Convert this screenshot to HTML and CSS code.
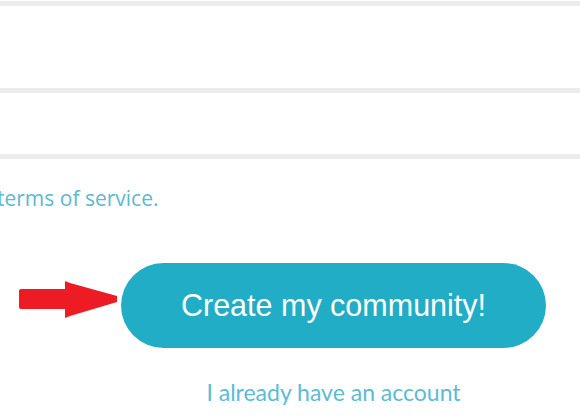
FILE: index.html
```html
<!DOCTYPE html>
<html lang="en">
<head>
  <meta charset="UTF-8">
  <meta name="viewport" content="width=device-width, initial-scale=1.0">
  <title>Create community</title>
  <link rel="stylesheet" href="styles.css">
</head>
<body>
  <div class="fields">
    <div class="field field-name"></div>
    <div class="field field-email"></div>
  </div>

  <p class="terms"><a href="#">terms of service.</a></p>

  <div class="actions">
    <svg class="arrow" width="99" height="40" viewBox="0 0 99 40">
      <path d="M2 9 H46 V1 L51 3 L98 16 V22 L51 36 L46 38 V29 H2 Q0 29 0 27 V11 Q0 9 2 9 Z" fill="#ed1c24"/>
    </svg>
    <button type="submit" class="create">Create my community!</button>
    <a href="#" class="login">I already have an account</a>
  </div>
</body>
</html>
```

FILE: styles.css
```css
body {
  margin: 0;
  background-color: white;
  overflow: hidden;
  font-family: "Liberation Sans", Arial, sans-serif;
}
.fields {
  padding-top: 1px;
}
.field {
  border-top: 5px solid #ececec;
}
.field-name {
  height: 82px;
}
.field-email {
  height: 61px;
  border-bottom: 5px solid #ececec;
}
.terms {
  margin: 26px 0 0 -3px;
  font-family: "Open Sans", sans-serif;
  font-size: 21px;
  line-height: 26px;
}
.terms a {
  color: #5cb9d1;
  text-decoration: none;
}
.actions {
  display: grid;
  grid-template-columns: 99px 425px;
  column-gap: 3px;
  margin-top: 52px;
  padding-left: 19px;
}
.arrow {
  align-self: start;
  margin-top: 17px;
}
.create {
  grid-column: 2;
  height: 85px;
  border: none;
  border-radius: 43px;
  background-color: #21adc5;
  color: white;
  font-family: "Liberation Sans", Arial, sans-serif;
  font-size: 30.5px;
  cursor: pointer;
}
.login {
  grid-column: 2;
  justify-self: center;
  margin-top: 30px;
  font-family: "Lato", sans-serif;
  font-size: 23px;
  color: #5bbcd5;
  text-decoration: none;
}
```
